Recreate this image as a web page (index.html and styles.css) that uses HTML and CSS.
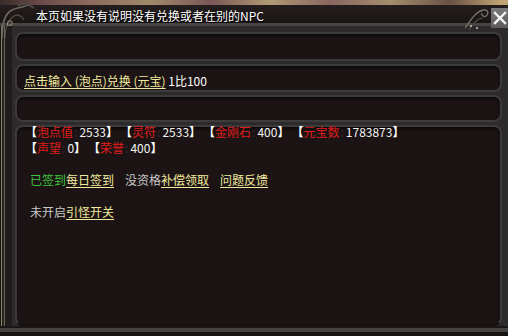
FILE: index.html
```html
<!DOCTYPE html>
<html lang="zh-CN">
<head>
    <meta charset="UTF-8">
    <title>NPC</title>
    <link rel="stylesheet" href="styles.css">
</head>
<body>
    <div class="window">
        <div class="top-strip"></div>
        <div class="titlebar">
            <span class="title">本页如果没有说明没有兑换或者在别的NPC</span>
        </div>

        <div class="frame">
            <div class="panel panel-top"></div>

            <div class="panel panel-line">
                <a class="link">点击输入 (泡点)兑换 (元宝)</a> 1比100
            </div>

            <div class="panel panel-empty"></div>

            <div class="panel panel-main">
                <div class="stats">
                    <span class="stat"><b>【</b><em>泡点值</em><i>:</i>2533<b>】</b></span>
                    <span class="stat"><b>【</b><em>灵符</em><i>:</i>2533<b>】</b></span>
                    <span class="stat"><b>【</b><em>金刚石</em><i>:</i>400<b>】</b></span>
                    <span class="stat"><b>【</b><em>元宝数</em><i>:</i>1783873<b>】</b></span>
                </div>
                <div class="stats">
                    <span class="stat"><b>【</b><em>声望</em><i>:</i>0<b>】</b></span>
                    <span class="stat"><b>【</b><em>荣誉</em><i>:</i>400<b>】</b></span>
                </div>

                <div class="actions">
                    <span class="action"><span class="done">已签到</span><a class="link">每日签到</a></span>
                    <span class="action"><span class="muted">没资格</span><a class="link">补偿领取</a></span>
                    <span class="action"><a class="link">问题反馈</a></span>
                </div>
                <div class="actions">
                    <span class="action"><span class="muted">未开启</span><a class="link">引怪开关</a></span>
                </div>
            </div>
        </div>
        <div class="frame-foot"></div>

        <!-- corner ornaments and close button sit over the frame -->
        <svg class="corner-left" width="34" height="36" viewBox="0 0 34 36">
            <path d="M2 36 C2 22 4 12 12 8 C18 5 24 6 30 2" fill="none" stroke="#6e6b62" stroke-width="1.5"/>
            <path d="M5 36 C5 26 8 18 14 14 C18 12 22 14 24 18" fill="none" stroke="#55524a" stroke-width="1.2"/>
            <path d="M8 24 C6 20 10 17 12 20 C13 22 11 24 9 23" fill="none" stroke="#8a8570" stroke-width="1.2"/>
            <path d="M18 4 C22 0 28 2 34 6" fill="none" stroke="#4c4944" stroke-width="2"/>
        </svg>
        <svg class="corner-right" width="26" height="26" viewBox="0 0 26 26">
            <path d="M0 24 C6 16 10 8 18 6 C22 5 24 8 22 11 C20 14 16 12 17 9" fill="none" stroke="#77746a" stroke-width="1.3"/>
            <path d="M4 26 C8 20 12 14 18 14" fill="none" stroke="#4e4b45" stroke-width="1.2"/>
            <circle cx="6" cy="22" r="1" fill="#c8c4b0"/>
            <circle cx="12" cy="24" r="1" fill="#c8c4b0"/>
        </svg>
        <div class="close">
            <svg width="14" height="14" viewBox="0 0 14 14">
                <path d="M2 2 L12 12 M12 2 L2 12" stroke="#f4f4f4" stroke-width="2.4" stroke-linecap="square"/>
            </svg>
        </div>
    </div>
</body>
</html>
```

FILE: styles.css
```css
* {
    margin: 0;
    padding: 0;
    box-sizing: border-box;
}

body {
    background-color: #141010;
    width: 508px;
    height: 336px;
    overflow: hidden;
    font-family: "Noto Sans CJK SC", "DejaVu Sans", sans-serif;
    font-size: 12px;
    line-height: 16px;
    color: #eeeeee;
}

.window {
    position: relative;
    width: 508px;
    height: 336px;
    background-color: #2c2a2a;
}

.top-strip {
    height: 5px;
    background: linear-gradient(to right, #3a2c2a 0, #6a4a48 40px, #8c6a5e 90px, #a08a6a 150px, #7a5656 210px, #b09a74 270px, #8a6660 330px, #a48e6c 390px, #6a5046 450px, #c0a474 500px);
}

.titlebar {
    height: 21px;
    padding: 3px 0 0 36px;
    display: flex;
    align-items: center;
    background: linear-gradient(#241d1d, #1a1414);
    border-bottom: 3px solid #474444;
}

.title {
    color: #ffffff;
    text-shadow: 1px 1px 0 #000;
}

.frame {
    display: flex;
    flex-direction: column;
    gap: 3px;
    padding: 6px 6px 0 15px;
    background: linear-gradient(to right, #151212 0, #151212 1px, #8a8466 1px, #8a8466 2px, #262323 2px, #262323 4px, #6a654f 4px, #6a654f 5px, #1f1c1c 5px, #1f1c1c 12px, #2c2a2a 12px);
}

.panel {
    background-color: #1c1414;
    border: 2px solid #3c3a3a;
    border-radius: 8px;
    box-shadow: inset 0 2px 3px rgba(0, 0, 0, 0.6);
}

.panel-top {
    height: 29px;
}

.panel-line {
    height: 28px;
    padding: 7px 0 0 7px;
    color: #ffffff;
}

.panel-empty {
    height: 27px;
}

.panel-main {
    height: 201px;
    padding: 0 0 0 8px;
    border-bottom-color: #141010;
}

.link {
    color: #f2ea9e;
    text-decoration: underline;
    text-underline-offset: 2px;
}

.stats {
    display: flex;
    white-space: nowrap;
}

.stats:first-child {
    margin-top: -3px;
}

.stat {
    margin-right: 2px;
    color: #f2f2f2;
}

.stat b {
    color: #ffffff;
    font-weight: bold;
}

.stat em {
    font-style: normal;
    color: #e01c1c;
}

.stat i {
    font-style: normal;
    color: #3a2c2c;
    margin: 0 2px 0 1px;
}

.actions {
    display: flex;
    margin: 16px 0 0 5px;
    white-space: nowrap;
}

.action {
    margin-right: 11px;
}

.done {
    color: #3ec43e;
}

.muted {
    color: #c8c8c8;
}

.frame-foot {
    height: 10px;
    background: linear-gradient(#1a1616 0, #1a1616 2px, #454242 2px, #454242 6px, #181414 6px);
}

.corner-left {
    position: absolute;
    left: 0;
    top: 2px;
}

.corner-right {
    position: absolute;
    left: 465px;
    top: 4px;
}

.close {
    position: absolute;
    left: 491px;
    top: 8px;
    width: 17px;
    height: 20px;
    background: linear-gradient(#7a7878, #5c5a5a);
    display: flex;
    justify-content: center;
    align-items: center;
}
```
